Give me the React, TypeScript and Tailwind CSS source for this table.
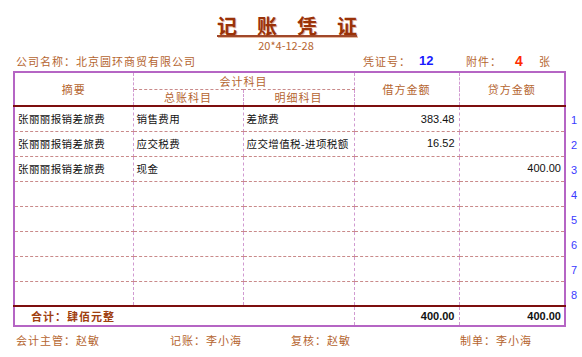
const brown = "text-[#b5652f]";

const rows = [
  { summary: "张丽丽报销差旅费", ledger: "销售费用", detail: "差旅费", debit: "383.48", credit: "" },
  { summary: "张丽丽报销差旅费", ledger: "应交税费", detail: "应交增值税-进项税额", debit: "16.52", credit: "" },
  { summary: "张丽丽报销差旅费", ledger: "现金", detail: "", debit: "", credit: "400.00" },
  { summary: "", ledger: "", detail: "", debit: "", credit: "" },
  { summary: "", ledger: "", detail: "", debit: "", credit: "" },
  { summary: "", ledger: "", detail: "", debit: "", credit: "" },
  { summary: "", ledger: "", detail: "", debit: "", credit: "" },
  { summary: "", ledger: "", detail: "", debit: "", credit: "" },
];

const vLine = "border-r border-dashed border-r-[#d19ad1]";
const darkLine = "border-b-2 [border-bottom-style:solid] border-b-[#7d0e0e]";
const dashLine = "border-b border-dashed border-b-[#c98a8a]";

export default function App() {
  return (
    <div
      className="w-[582px] h-[357px] bg-white overflow-hidden"
      style={{ fontFamily: '"Noto Sans CJK SC", "Liberation Sans", sans-serif' }}
    >
      {/* title */}
      <div className="pt-[16px] flex justify-center pr-[8px]">
        <h1 className="text-[20px] leading-[20px] font-bold text-[#9a3208] underline decoration-[#a0482a] decoration-2 underline-offset-[1px] [text-shadow:1px_1px_0_#e6b8a0]">
          记　账　凭　证
        </h1>
      </div>
      <p className={`text-center text-[11px] leading-[12px] mt-[3px] pr-[10px] ${brown}`}>
        20*4-12-28
      </p>

      {/* company info */}
      <div className={`flex items-center text-[11px] leading-[16px] mt-[2px] h-[16px] ${brown} tracking-[1px]`}>
        <span className="ml-[16px] w-[347px]">公司名称：北京圆环商贸有限公司</span>
        <span>凭证号：</span>
        <span className="ml-[8px] w-[47px] text-[13px] font-bold text-[#1a1aff] tracking-normal" style={{ fontFamily: '"Liberation Sans", sans-serif' }}>12</span>
        <span>附件：</span>
        <span className="ml-[13px] w-[24px] text-[14px] font-bold text-[#ff2a00] tracking-normal" style={{ fontFamily: '"Liberation Sans", sans-serif' }}>4</span>
        <span>张</span>
      </div>

      {/* table */}
      <div className="flex mt-[2px] ml-[13px]">
        <table className="w-[551px] table-fixed border-collapse border-2 border-[#b565c4]">
          <colgroup>
            <col className="w-[119px]" />
            <col className="w-[110px]" />
            <col className="w-[111px]" />
            <col className="w-[105px]" />
            <col className="w-[106px]" />
          </colgroup>
          <thead className={`text-[11px] font-normal tracking-[1px] ${brown}`}>
            <tr className="h-[17px]">
              <th rowSpan={2} className={`font-normal ${vLine} ${darkLine}`}>摘要</th>
              <th colSpan={2} className={`font-normal leading-[14px] ${vLine} ${dashLine}`}>会计科目</th>
              <th rowSpan={2} className={`font-normal ${vLine} ${darkLine}`}>借方金额</th>
              <th rowSpan={2} className={`font-normal ${darkLine}`}>贷方金额</th>
            </tr>
            <tr className="h-[17px]">
              <th className={`font-normal leading-[14px] ${vLine} ${darkLine}`}>总账科目</th>
              <th className={`font-normal leading-[14px] ${vLine} ${darkLine}`}>明细科目</th>
            </tr>
          </thead>
          <tbody className="text-[10.5px] text-[#111]">
            {rows.map((r, i) => {
              const hLine = i === rows.length - 1 ? darkLine : dashLine;
              return (
                <tr key={i} className="h-[25px]">
                  <td className={`pl-[3px] tracking-[0.4px] ${vLine} ${hLine}`}>{r.summary}</td>
                  <td className={`pl-[3px] tracking-[0.4px] ${vLine} ${hLine}`}>{r.ledger}</td>
                  <td className={`pl-[3px] tracking-[0.4px] whitespace-nowrap ${vLine} ${hLine}`}>{r.detail}</td>
                  <td
                    className={`pr-[4px] text-right text-[11px] ${vLine} ${hLine}`}
                    style={{ fontFamily: '"Liberation Sans", sans-serif' }}
                  >
                    {r.debit}
                  </td>
                  <td
                    className={`pr-[3px] text-right text-[11px] ${hLine}`}
                    style={{ fontFamily: '"Liberation Sans", sans-serif' }}
                  >
                    {r.credit}
                  </td>
                </tr>
              );
            })}
            <tr className="h-[20px]">
              <td colSpan={3} className={`pl-[16px] text-[11px] font-bold tracking-[1px] text-[#a0400f] ${vLine}`}>
                合计：肆佰元整
              </td>
              <td
                className={`pr-[4px] text-right text-[11px] font-bold ${vLine}`}
                style={{ fontFamily: '"Liberation Sans", sans-serif' }}
              >
                400.00
              </td>
              <td
                className="pr-[3px] text-right text-[11px] font-bold"
                style={{ fontFamily: '"Liberation Sans", sans-serif' }}
              >
                400.00
              </td>
            </tr>
          </tbody>
        </table>

        {/* row numbers */}
        <div
          className="flex flex-col pt-[37px] pl-[5px] text-[11px] text-[#3a3aff]"
          style={{ fontFamily: '"Liberation Sans", sans-serif' }}
        >
          {rows.map((_, i) => (
            <span key={i} className="h-[25px] leading-[25px]">
              {i + 1}
            </span>
          ))}
        </div>
      </div>

      {/* signatures */}
      <div className={`flex mt-[5px] text-[11px] leading-[16px] tracking-[1px] ${brown}`}>
        <span className="ml-[16px] w-[154px]">会计主管：赵敏</span>
        <span className="w-[121px]">记账：李小海</span>
        <span className="w-[169px]">复核：赵敏</span>
        <span>制单：李小海</span>
      </div>
    </div>
  );
}
